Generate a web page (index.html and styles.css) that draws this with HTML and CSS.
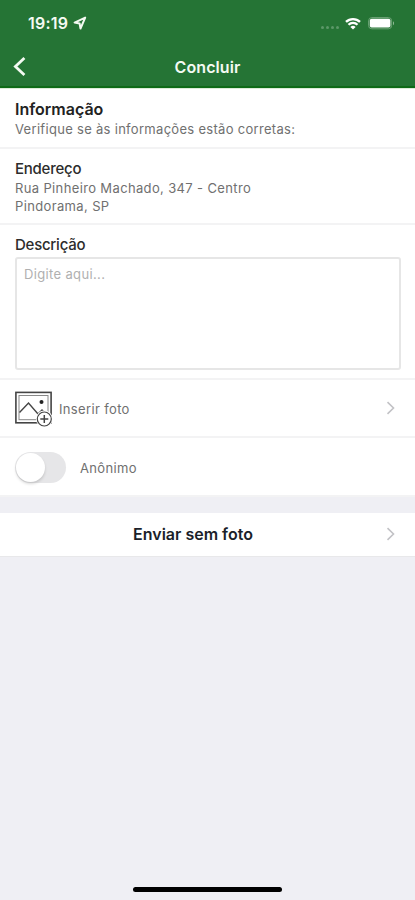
FILE: index.html
```html
<!DOCTYPE html>
<html lang="pt-BR">

<head>
    <meta charset="UTF-8">
    <meta name="viewport" content="width=device-width, initial-scale=1.0">
    <title>Concluir</title>
    <link rel="stylesheet" href="styles.css">
</head>

<body>
    <div class="main">
        <header class="header">
            <div class="status">
                <span class="time">19:19</span>
                <svg class="location" width="14" height="14" viewBox="0 0 14 14">
                    <path d="M12.2 1.6L1.6 6.6l5 .9.9 5z" fill="none" stroke="#f4faf2" stroke-width="2" stroke-linejoin="round"/>
                </svg>
                <div class="signal"><i></i><i></i><i></i><i></i></div>
                <svg class="wifi" width="16" height="13" viewBox="0 0 16 13">
                    <path d="M1 4.9a10 10 0 0 1 14 0M3.5 7.7a6.4 6.4 0 0 1 9 0" fill="none" stroke="#fff" stroke-width="2.3"/>
                    <path d="M8 12.6L5.4 10a3.7 3.7 0 0 1 5.2 0z" fill="#fff"/>
                </svg>
                <svg class="battery" width="27" height="13" viewBox="0 0 27 13">
                    <rect x=".6" y=".6" width="23" height="11.2" rx="3.2" fill="none" stroke="#6fa478" stroke-width="1"/>
                    <rect x="1.8" y="1.8" width="20.6" height="8.8" rx="1.8" fill="#fff"/>
                    <path d="M25 4.3v4c1.4-.6 1.4-3.4 0-4z" fill="#8fb995"/>
                </svg>
            </div>
            <div class="nav">
                <a href="#" class="back">
                    <svg width="14" height="21" viewBox="0 0 14 21">
                        <path d="M11.4 2L2.4 10.5l9 8.5" fill="none" stroke="#f4faf2" stroke-width="2.8"/>
                    </svg>
                </a>
                <h1 class="title">Concluir</h1>
            </div>
        </header>

        <section class="item info">
            <h2>Informação</h2>
            <p>Verifique se às informações estão corretas:</p>
        </section>
        <section class="item address">
            <h2>Endereço</h2>
            <p>Rua Pinheiro Machado, 347 - Centro</p>
            <p>Pindorama, SP</p>
        </section>
        <section class="item description">
            <h2>Descrição</h2>
            <textarea placeholder="Digite aqui..."></textarea>
        </section>
        <a href="#" class="item photo">
            <svg class="picture" width="38" height="37" viewBox="0 0 38 37" fill="none" stroke="#444">
                <rect x=".9" y="1.4" width="35.2" height="30.4" stroke-width="1.6"/>
                <rect x="4" y="4.5" width="29" height="24.2" stroke="#888" stroke-width="1"/>
                <path d="M4.5 21.5l9-9.5 9.5 11 4-4 3 3" stroke-width="1.4"/>
                <circle cx="26.5" cy="11" r="2" fill="#222" stroke="none"/>
                <circle cx="29.3" cy="28" r="8.4" fill="#fff" stroke="none"/>
                <circle cx="29.3" cy="28" r="7" stroke-width="1.2"/>
                <path d="M25.3 28h8M29.3 24v8" stroke-width="1.5"/>
            </svg>
            <span class="label">Inserir foto</span>
            <svg class="arrow" width="10" height="14" viewBox="0 0 10 14">
                <path d="M1.5 1.2L7.5 7l-6 5.8"/>
            </svg>
        </a>
        <div class="item anonymous">
            <span class="switch"></span>
            <span class="label">Anônimo</span>
        </div>

        <a href="#" class="send">
            <span>Enviar sem foto</span>
            <svg class="arrow" width="10" height="14" viewBox="0 0 10 14">
                <path d="M1.5 1.2L7.5 7l-6 5.8"/>
            </svg>
        </a>
        <div class="home"></div>
    </div>
</body>

</html>
```

FILE: styles.css
```css
* {
    box-sizing: border-box;
}

body {
    margin: 0;
    font-family: Inter, "Liberation Sans", sans-serif;
    color: #707070;
}

h1,
h2,
p {
    margin: 0;
}

a {
    color: inherit;
    text-decoration: none;
}

svg {
    display: block;
    flex: none;
}

.main {
    display: flex;
    flex-direction: column;
    height: 900px;
    background: #efeff4;
    overflow: hidden;
}

.header {
    height: 88px;
    background: #257435;
    border-bottom: 2px solid #0e6a17;
    color: #f4faf2;
}

.status {
    display: flex;
    align-items: center;
    height: 46px;
    padding: 0 20px 0 28px;
}

.time {
    width: 41px;
    font-size: 16px;
    font-weight: 600;
    letter-spacing: .2px;
    white-space: nowrap;
}

.location {
    margin-left: 4px;
}

.signal {
    display: flex;
    gap: 2px;
    margin: 8px 6px 0 auto;
}

.signal i {
    width: 3px;
    height: 3px;
    border-radius: 50%;
    background: #5c9868;
}

.wifi {
    margin-right: 7px;
}

.nav {
    display: grid;
    grid-template-columns: 40px 1fr 40px;
    align-items: center;
    height: 41px;
}

.back {
    padding-left: 13px;
}

.title {
    font-size: 16px;
    font-weight: 600;
    letter-spacing: .1px;
    text-align: center;
}

.item {
    padding: 0 14px 0 15px;
    background: #fff;
    border-bottom: 2px solid #f3f3f4;
}

.item h2 {
    font-size: 15px;
    font-weight: 500;
    line-height: 20px;
    letter-spacing: -.25px;
    color: #2c2c2c;
}

.item p {
    font-size: 13px;
    line-height: 18px;
    letter-spacing: .3px;
}

.info {
    height: 61px;
    padding-top: 10px;
    border-top: 1px solid #dcebd8;
}

.info h2 {
    font-size: 16px;
    font-weight: 600;
    line-height: 21px;
    letter-spacing: 0;
    color: #222;
}

.address {
    height: 76px;
    padding-top: 10px;
}

.description {
    height: 155px;
    padding-top: 10px;
}

.address p {
    letter-spacing: .36px;
}

textarea {
    display: block;
    width: 386px;
    height: 113px;
    margin-top: 2px;
    padding: 7px 7px;
    border: 2px solid #e6e6e6;
    border-radius: 3px;
    font: 13px/16px Inter, "Liberation Sans", sans-serif;
    letter-spacing: .35px;
    resize: none;
}

textarea::placeholder {
    color: #b0b0b0;
}

.photo,
.anonymous {
    display: flex;
    align-items: center;
    height: 58px;
}

.picture {
    margin-top: 2px;
}

.label {
    font-size: 13px;
    letter-spacing: .35px;
}

.photo .label {
    margin: 1px 0 0 6px;
}

.arrow {
    margin-left: auto;
    margin-right: 5px;
    fill: none;
    stroke: #c2c2c6;
    stroke-width: 1.6;
}

.anonymous {
    height: 59px;
    padding-top: 2px;
}

.switch {
    width: 51px;
    height: 31px;
    margin-right: 14px;
    padding: 1px;
    border-radius: 16px;
    background: #e6e6e8;
}

.switch::before {
    content: "";
    display: block;
    width: 29px;
    height: 29px;
    border-radius: 50%;
    background: #fff;
    box-shadow: 0 2px 3px rgba(0, 0, 0, .15);
}

.send {
    display: grid;
    grid-template-columns: 1fr auto;
    align-items: center;
    height: 44px;
    margin-top: 16px;
    padding: 0 14px 2px 0;
    background: #fff;
    border-bottom: 1px solid #e8e8ea;
    font-size: 16px;
    font-weight: 600;
    color: #1b1f2a;
    text-align: center;
}

.home {
    width: 149px;
    height: 5px;
    margin: auto auto 8px;
    border-radius: 3px;
    background: #000;
}
```
